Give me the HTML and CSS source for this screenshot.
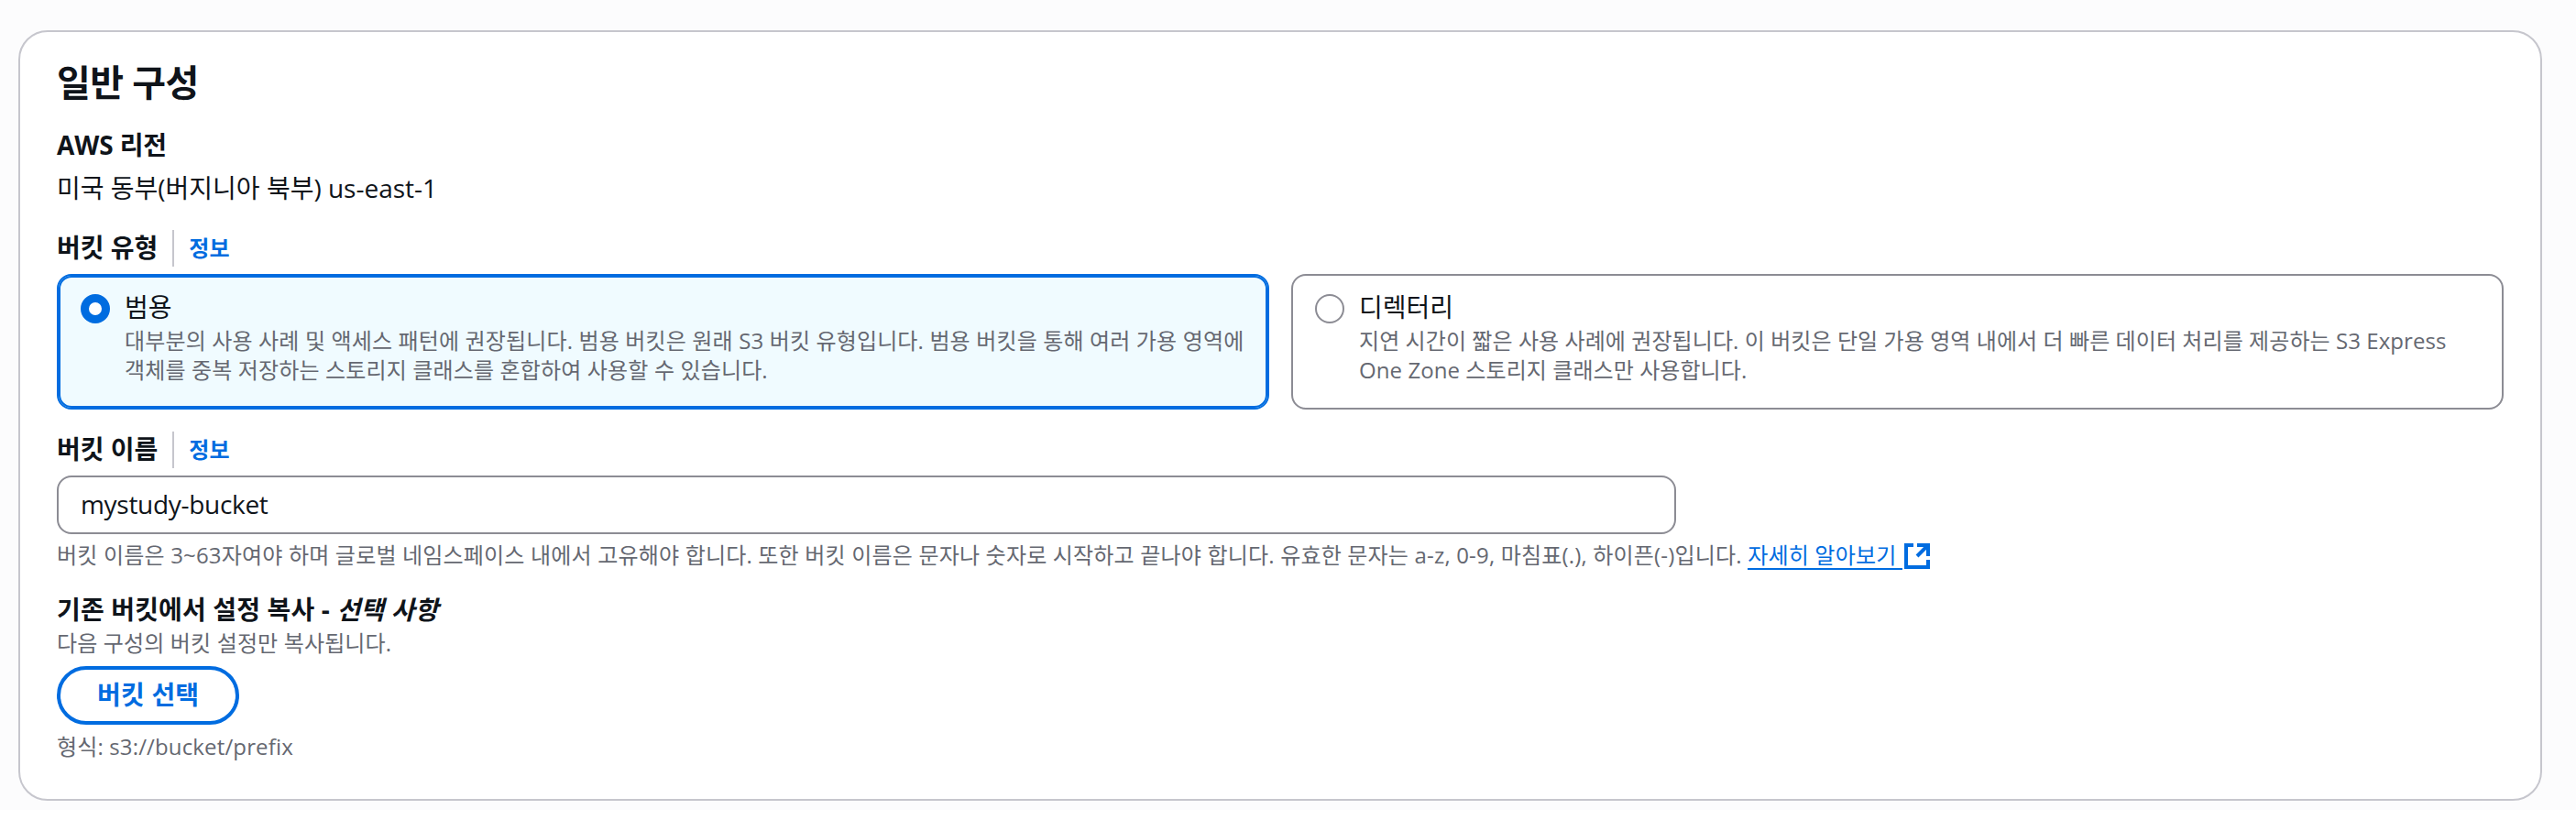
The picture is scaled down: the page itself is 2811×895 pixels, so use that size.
FILE: index.html
```html
<!DOCTYPE html>
<html lang="ko">
<head>
<meta charset="utf-8">
<title>일반 구성</title>
<link rel="stylesheet" href="styles.css">
</head>
<body>
<main class="page">
  <section class="card">
    <h2 class="title">일반 구성</h2>
    <div class="region">
      <div class="label">AWS 리전</div>
      <div class="value">미국 동부(버지니아 북부) us-east-1</div>
    </div>
    <div class="field">
      <div class="label-row"><span class="label">버킷 유형</span><a class="info">정보</a></div>
      <div class="tiles">
        <label class="tile tile-selected">
          <span class="radio radio-on"></span>
          <span class="tile-text">
            <span class="tile-name">범용</span>
            <span class="hint">대부분의 사용 사례 및 액세스 패턴에 권장됩니다. 범용 버킷은 원래 S3 버킷 유형입니다. 범용 버킷을 통해 여러 가용 영역에<br>객체를 중복 저장하는 스토리지 클래스를 혼합하여 사용할 수 있습니다.</span>
          </span>
        </label>
        <label class="tile">
          <span class="radio"></span>
          <span class="tile-text">
            <span class="tile-name">디렉터리</span>
            <span class="hint hint-mixed">지연 시간이 짧은 사용 사례에 권장됩니다. 이 버킷은 단일 가용 영역 내에서 더 빠른 데이터 처리를 제공하는 S3 Express<br>One Zone 스토리지 클래스만 사용합니다.</span>
          </span>
        </label>
      </div>
    </div>
    <div class="field">
      <div class="label-row"><span class="label">버킷 이름</span><a class="info">정보</a></div>
      <input class="input" type="text" value="mystudy-bucket">
      <div class="hint help">버킷 이름은 3~63자여야 하며 글로벌 네임스페이스 내에서 고유해야 합니다. 또한 버킷 이름은 문자나 숫자로 시작하고 끝나야 합니다. 유효한 문자는 a-z, 0-9, 마침표(.), 하이픈(-)입니다. <a class="link">자세히 알아보기&nbsp;</a><svg class="external" viewBox="0 0 28 28"><path d="M10 2H2v24h24v-8M14 2h12v12M26 2 14 14"/></svg></div>
    </div>
    <div class="copy">
      <div class="label copy-label">기존 버킷에서 설정 복사 - <em>선택 사항</em></div>
      <div class="hint">다음 구성의 버킷 설정만 복사됩니다.</div>
      <button class="button">버킷 선택</button>
      <div class="hint">형식: s3://bucket/prefix</div>
    </div>
  </section>
</main>
</body>
</html>
```
FILE: styles.css
```css
* { box-sizing: border-box; }
body {
  margin: 0;
  background: #fff;
  color: #0f141a;
  font: 28px/40px "Open Sans", "Noto Sans CJK KR", sans-serif;
}
.page {
  height: 884px;
  padding: 33px 37px 10px 20px;
  background: #fcfcfd;
}
.card {
  height: 841px;
  padding: 31px 40px;
  border: 2px solid #c6c6cd;
  border-radius: 32px;
  background: #fff;
}
.title {
  margin: 0;
  font-size: 40px;
  line-height: 48px;
  font-weight: 700;
  letter-spacing: -0.6px;
}
.region { margin-top: 25px; }
.region .label { letter-spacing: -0.1px; }
.label { padding-bottom: 2px; font-weight: 700; line-height: 38px; }
.value { margin-top: 6px; }
.field { margin-top: 24px; }
.region + .field { margin-top: 26px; }
.label-row { display: flex; height: 40px; }
.info {
  margin-left: 16px;
  padding-left: 16px;
  border-left: 2px solid #c6c6cd;
  color: #006ce0;
  font-size: 24px;
  font-weight: 700;
}
.tiles {
  display: grid;
  grid-template-columns: 1fr 1fr;
  gap: 24px;
  margin-top: 8px;
}
.tile {
  display: flex;
  gap: 16px;
  height: 148px;
  padding: 15px 24px;
  border: 2px solid #8c8c94;
  border-radius: 16px;
}
.tile-selected {
  border-color: #006ce0;
  background: #f0fbff;
  box-shadow: inset 0 0 0 2px #006ce0;
}
.radio {
  flex: none;
  width: 32px;
  height: 32px;
  margin-top: 5px;
  border: 2px solid #8c8c94;
  border-radius: 50%;
  background: #fff;
}
.radio-on { border: 9px solid #006ce0; }
.tile-text { display: flex; flex-direction: column; white-space: nowrap; }
.tile-name { padding-bottom: 2px; line-height: 38px; }
.hint {
  color: #656871;
  font-size: 24px;
  line-height: 32px;
  letter-spacing: 0.14px;
}
.hint-mixed { letter-spacing: 0.07px; }
.input {
  display: block;
  width: 1767px;
  height: 64px;
  margin-top: 8px;
  padding: 0 24px 2px;
  border: 2px solid #8c8c94;
  border-radius: 16px;
  background: #fff;
  color: inherit;
  font: inherit;
  letter-spacing: -0.3px;
}
.help {
  display: flex;
  margin-top: 7px;
  white-space: pre;
  letter-spacing: 0.18px;
}
.link { height: 32px; border-bottom: 2px solid #006ce0; color: #006ce0; }
.external {
  width: 28px;
  height: 28px;
  margin: 3px 0 0 2px;
  fill: none;
  stroke: #006ce0;
  stroke-width: 4;
}
.copy { margin-top: 24px; }
.copy-label { letter-spacing: 0.15px; }
.button {
  display: block;
  height: 64px;
  margin: 9px 0 8px;
  padding: 0 40px 2px;
  border: 4px solid #006ce0;
  border-radius: 40px;
  background: #fff;
  color: #006ce0;
  font: inherit;
  font-weight: 700;
  letter-spacing: 0.2px;
}
```
